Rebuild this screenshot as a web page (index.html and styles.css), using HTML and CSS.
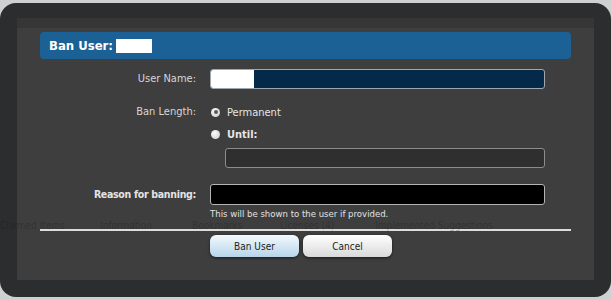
FILE: index.html
```html
<!DOCTYPE html>
<html lang="en">
<head>
  <meta charset="UTF-8" />
  <meta name="viewport" content="width=device-width, initial-scale=1.0" />
  <title>Ban User</title>
  <link rel="stylesheet" href="styles.css">
</head>
<body>
  <div class="frame">
    <div class="ghost-tabs">
      <span>Claimed Items</span>
      <span>Information</span>
      <span>Bookmarks</span>
      <span>Licenses (4)</span>
      <span>Implemented Suggestions</span>
    </div>

    <div class="panel">
      <h2 class="title">Ban User: <span class="redact"></span></h2>

      <form class="ban-form">
        <div class="row">
          <label>User Name:</label>
          <div class="field user-field"><span class="redact"></span></div>
        </div>

        <div class="row row-length">
          <label>Ban Length:</label>
          <div class="choices">
            <div class="choice"><span class="radio checked"></span>Permanent</div>
            <div class="choice choice-bold"><span class="radio"></span>Until:</div>
            <div class="field date-field"></div>
          </div>
        </div>

        <div class="row row-reason">
          <label class="bold">Reason for banning:</label>
          <div>
            <div class="field reason-field"></div>
            <p class="hint">This will be shown to the user if provided.</p>
          </div>
        </div>

        <div class="actions">
          <button type="button" class="btn btn-primary">Ban User</button>
          <button type="button" class="btn">Cancel</button>
        </div>
      </form>
    </div>
  </div>
</body>
</html>
```

FILE: styles.css
```css
* {
  margin: 0;
  padding: 0;
  box-sizing: border-box;
}
body {
  background: #cfd0d2;
  padding-top: 3px;
  font-family: 'DejaVu Sans Condensed', 'DejaVu Sans', sans-serif;
  color: #d6d6d6;
  overflow: hidden;
}
.frame {
  position: relative;
  height: 294px;
  background: #2b2d2f;
  border-radius: 16px;
  padding: 15px 17px 0 17px;
}
.panel {
  position: relative;
  height: 262px;
  background: #3e3e3e;
  border-top: 10px solid #363637;
  padding: 4px 23px 0 23px;
}
.title {
  display: flex;
  align-items: center;
  gap: 3px;
  height: 27px;
  background: #1b6195;
  border-radius: 4px;
  padding-left: 9px;
  color: #fff;
  font-size: 13px;
  font-weight: bold;
}
.title .redact {
  width: 36px;
  height: 14px;
  background: #fff;
}
.ban-form {
  margin-top: 10px;
}
.row {
  display: grid;
  grid-template-columns: 156px 1fr;
  column-gap: 14px;
  align-items: start;
  width: 505px;
}
.row label {
  text-align: right;
  font-size: 11px;
  line-height: 20px;
}
.row label.bold {
  font-weight: bold;
  font-size: 10.5px;
  letter-spacing: -0.3px;
  color: #e4e4e4;
}
.field {
  height: 20px;
  border-radius: 3px;
  border: 1px solid #9fa8b0;
}
.user-field {
  background: #052a49;
  display: flex;
}
.user-field .redact {
  width: 43px;
  background: #fff;
  border-radius: 2px 0 0 2px;
}
.row-length {
  margin-top: 15px;
}
.row-length label {
  line-height: 16px;
}
.choice {
  display: flex;
  align-items: center;
  height: 16px;
  font-size: 11px;
  color: #e6e6e6;
  margin-bottom: 6px;
}
.choice-bold {
  font-weight: bold;
}
.radio {
  width: 9px;
  height: 9px;
  border-radius: 50%;
  background: radial-gradient(circle at 40% 35%, #fafafa, #c9c9c9);
  margin: 0 7px 0 1px;
  display: flex;
  align-items: center;
  justify-content: center;
}
.radio.checked::after {
  content: '';
  width: 4px;
  height: 4px;
  border-radius: 50%;
  background: #5a5a5a;
}
.date-field {
  margin-left: 15px;
  margin-top: 3px;
  background: #2f2f2f;
  border-color: #8c8c8c;
}
.row-reason {
  margin-top: 16px;
}
.reason-field {
  background: #000;
  border-color: #b5b5b5;
  height: 21px;
}
.hint {
  font-size: 9.5px;
  color: #e2e2e2;
  margin-top: 3px;
}
.actions {
  border-top: 2px solid #dcdcdc;
  margin-top: 10px;
  padding: 4px 0 0 170px;
  display: flex;
  gap: 4px;
}
.btn {
  width: 89px;
  height: 22px;
  border: none;
  border-radius: 6px;
  background: linear-gradient(#ffffff, #d9d9d9);
  box-shadow: 0 1px 3px rgba(0, 0, 0, 0.6);
  font-family: 'DejaVu Sans Condensed', 'DejaVu Sans', sans-serif;
  font-size: 10px;
  color: #222;
}
.btn-primary {
  background: linear-gradient(#f4f9fd, #b6d5eb);
}
.ghost-tabs {
  position: absolute;
  z-index: 1;
  top: 217px;
  left: 0;
  display: flex;
  font-size: 10px;
  color: rgba(20, 20, 20, 0.3);
  pointer-events: none;
}
.ghost-tabs span:nth-child(1) { width: 100px; }
.ghost-tabs span:nth-child(2) { width: 92px; }
.ghost-tabs span:nth-child(3) { width: 88px; }
.ghost-tabs span:nth-child(4) { width: 95px; }
```
